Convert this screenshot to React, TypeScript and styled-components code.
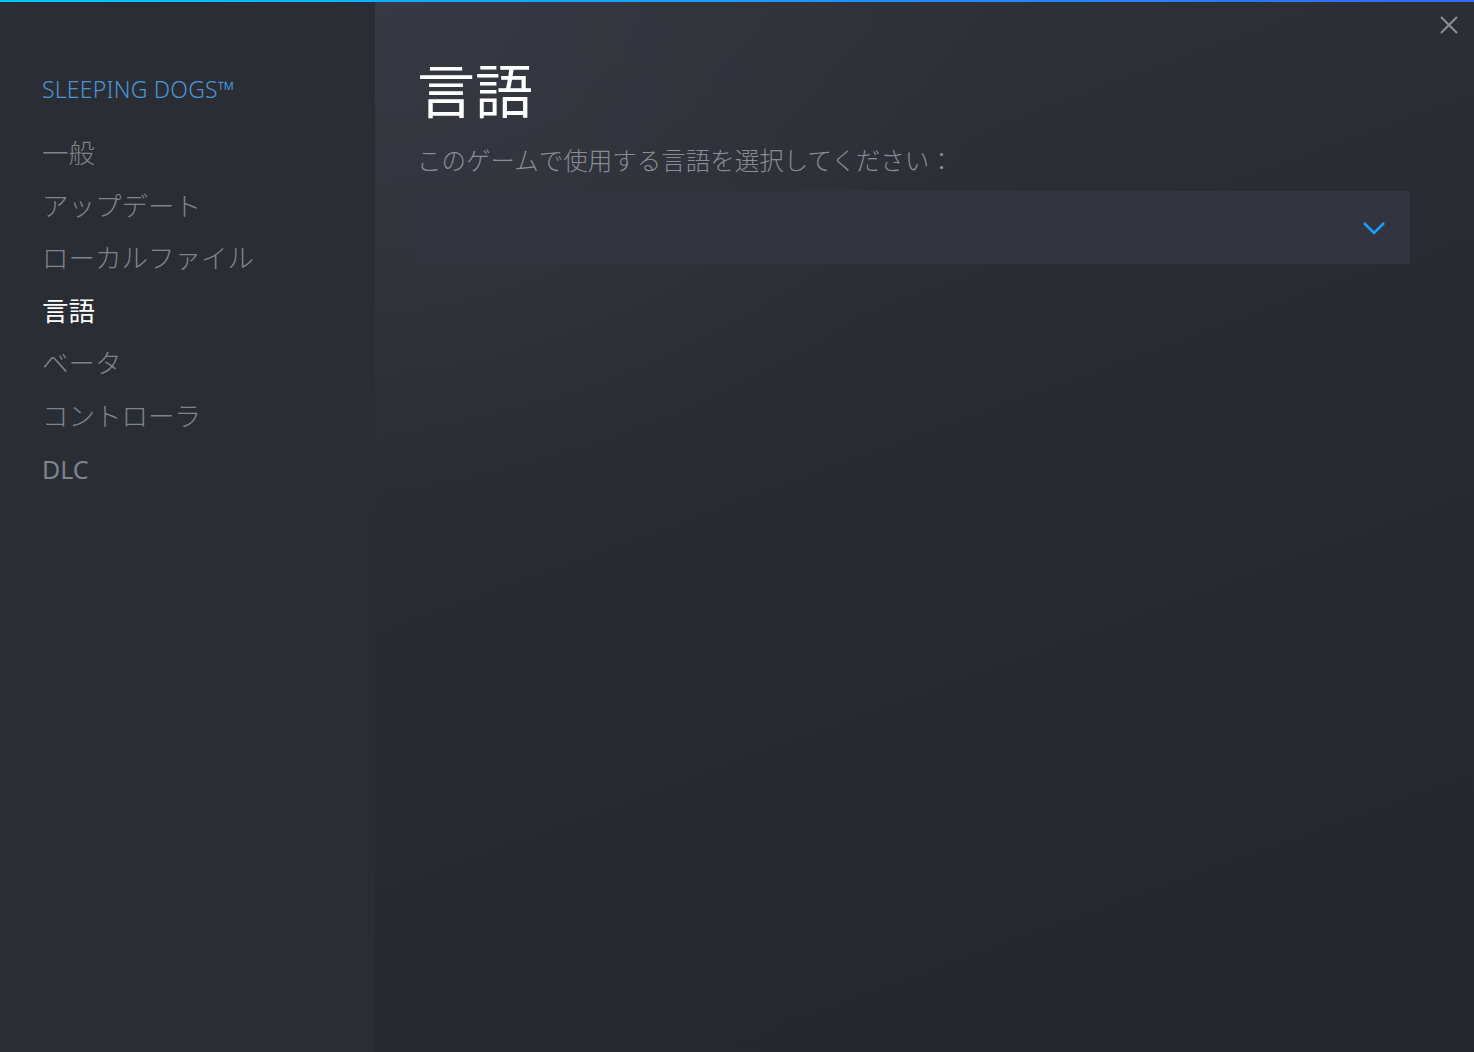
import React, { useState } from 'react';
import styled, { createGlobalStyle } from 'styled-components';

const GlobalStyle = createGlobalStyle`
  html, body {
    margin: 0;
    padding: 0;
    background: #24272e;
  }
  #root {
    height: 100vh;
  }
`;

const Window = styled.div`
  position: relative;
  display: flex;
  flex-direction: column;
  height: 100vh;
  font-family: "Noto Sans CJK JP", "Noto Sans", sans-serif;
  overflow: hidden;
`;

const AccentBar = styled.div`
  height: 2px;
  flex: none;
  background: linear-gradient(90deg, #00c6ff 0%, #1a9bff 50%, #2f6bff 100%);
`;

const Body = styled.div`
  flex: 1;
  display: flex;
  min-height: 0;
`;

const Sidebar = styled.nav`
  width: 375px;
  flex: none;
  background: #2a2d34;
  padding: 73px 0 0 42px;
  box-sizing: border-box;
  display: flex;
  flex-direction: column;
`;

const GameTitle = styled.div`
  font-family: "Noto Sans", "Open Sans", sans-serif;
  font-size: 23px;
  font-weight: 300;
  line-height: 28px;
  color: #4b95d6;
  letter-spacing: 0.2px;
  margin-bottom: 32px;
`;

const NavItem = styled.div<{ $active?: boolean }>`
  font-size: 26.5px;
  line-height: 34px;
  height: 34px;
  margin-bottom: 18.5px;
  color: ${(p) => (p.$active ? '#ffffff' : '#7f838b')};
  font-weight: ${(p) => (p.$active ? 400 : 300)};
  cursor: pointer;
  white-space: nowrap;
`;

const LatinNav = styled(NavItem)`
  font-family: "Noto Sans", "Open Sans", sans-serif;
  font-size: 25px;
  font-weight: 400;
  margin-top: 2px;
`;

const Main = styled.main`
  flex: 1;
  padding: 50px 64px 0 42px;
  background:
    radial-gradient(ellipse 900px 700px at 0% 0%, rgba(60, 63, 72, 0.55), rgba(60, 63, 72, 0) 70%),
    linear-gradient(160deg, #30333a 0%, #282b32 45%, #23262d 100%);
`;

const Heading = styled.h1`
  margin: 0;
  font-size: 58px;
  font-weight: 400;
  line-height: 72px;
  color: #ffffff;
`;

const Prompt = styled.p`
  margin: 20px 0 0 0;
  font-size: 24.5px;
  font-weight: 300;
  line-height: 32px;
  color: #8a8d94;
`;

const Dropdown = styled.button`
  margin-top: 15px;
  width: 100%;
  height: 73px;
  border: none;
  border-radius: 3px;
  background: #32353d;
  display: flex;
  align-items: center;
  justify-content: flex-end;
  padding: 0 24px;
  box-sizing: border-box;
  cursor: pointer;
`;

const CloseButton = styled.button`
  position: absolute;
  top: 12px;
  right: 12px;
  width: 26px;
  height: 26px;
  border: none;
  background: transparent;
  padding: 0;
  display: flex;
  align-items: center;
  justify-content: center;
  cursor: pointer;
`;

const navItems = ['一般', 'アップデート', 'ローカルファイル', '言語', 'ベータ', 'コントローラ'];

export default function App() {
  const [active, setActive] = useState('言語');

  return (
    <Window>
      <GlobalStyle />
      <AccentBar />
      <Body>
        <Sidebar>
          <GameTitle>SLEEPING DOGS™</GameTitle>
          {navItems.map((item) => (
            <NavItem key={item} $active={item === active} onClick={() => setActive(item)}>
              {item}
            </NavItem>
          ))}
          <LatinNav $active={active === 'DLC'} onClick={() => setActive('DLC')}>
            DLC
          </LatinNav>
        </Sidebar>
        <Main>
          <Heading>言語</Heading>
          <Prompt>このゲームで使用する言語を選択してください：</Prompt>
          <Dropdown>
            <svg width="24" height="14" viewBox="0 0 24 14" fill="none">
              <path d="M2 2 L12 12 L22 2" stroke="#1a9fff" strokeWidth="2.6" />
            </svg>
          </Dropdown>
        </Main>
      </Body>
      <CloseButton aria-label="close">
        <svg width="20" height="20" viewBox="0 0 20 20" fill="none">
          <path d="M2 2 L18 18 M18 2 L2 18" stroke="#8b9098" strokeWidth="2" />
        </svg>
      </CloseButton>
    </Window>
  );
}
